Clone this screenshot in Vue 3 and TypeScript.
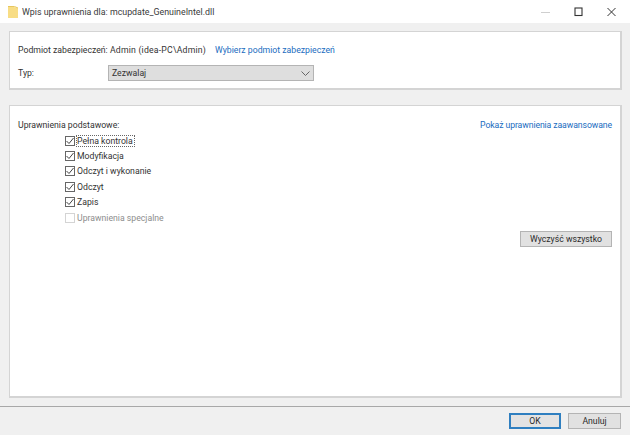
<script setup lang="ts">
const perms = [
  { label: 'Pełna kontrola', checked: true, focused: true },
  { label: 'Modyfikacja', checked: true },
  { label: 'Odczyt i wykonanie', checked: true },
  { label: 'Odczyt', checked: true },
  { label: 'Zapis', checked: true },
  { label: 'Uprawnienia specjalne', checked: false, disabled: true },
]
</script>

<template>
  <div class="window">
    <header class="titlebar">
      <svg class="folder" width="10" height="12" viewBox="0 0 10 12">
        <path d="M0 1h6l4 1v10H0z" fill="#f8dd85" />
        <path d="M0 .5h6.5l3.5 1.5" fill="none" stroke="#e6c65f" stroke-width="1" />
      </svg>
      <span class="title">Wpis uprawnienia dla: mcupdate_GenuineIntel.dll</span>
      <div class="controls">
        <svg width="9" height="10" viewBox="0 0 9 10"><path d="M0 5.5h9" stroke="#cfcfcf" /></svg>
        <svg width="9" height="10" viewBox="0 0 9 10"><rect x="1" y="1" width="7" height="7.5" fill="none" stroke="#333" stroke-width="1.1" /></svg>
        <svg width="9" height="10" viewBox="0 0 9 10"><path d="M.5 1l8 8M8.5 1l-8 8" stroke="#333" /></svg>
      </div>
    </header>

    <main class="content">
      <section class="panel top">
        <div class="row principal">
          <span class="plabel">Podmiot zabezpieczeń:</span>
          <span class="pvalue">Admin (idea-PC\Admin)</span>
          <a class="link">Wybierz podmiot zabezpieczeń</a>
        </div>
        <div class="row type">
          <span class="tlabel">Typ:</span>
          <div class="select">
            <span>Zezwalaj</span>
            <svg width="9" height="5" viewBox="0 0 9 5"><path d="M.5.5l4 4 4-4" fill="none" stroke="#666" /></svg>
          </div>
        </div>
      </section>

      <section class="panel perms">
        <div class="perm-head">
          <span>Uprawnienia podstawowe:</span>
          <a class="link advanced">Pokaż uprawnienia zaawansowane</a>
        </div>
        <ul class="list">
          <li v-for="p in perms" :key="p.label" :class="{ disabled: p.disabled }">
            <span class="box">
              <svg v-if="p.checked" width="10" height="10" viewBox="0 0 10 10"><path d="M1.5 5l2.5 2.5 4.5-5.5" fill="none" stroke="#444" stroke-width="1" /></svg>
            </span>
            <span class="lbl" :class="{ focused: p.focused }">{{ p.label }}</span>
          </li>
        </ul>
        <div class="clear-row"><button class="btn clear">Wyczyść wszystko</button></div>
      </section>
    </main>

    <footer class="footer">
      <button class="btn ok">OK</button>
      <button class="btn cancel">Anuluj</button>
    </footer>
  </div>
</template>

<style>
html, body { margin: 0; padding: 0; background: #f0f0f0; }
</style>

<style scoped>
.window {
  width: 630px;
  height: 435px;
  display: flex;
  flex-direction: column;
  background: #f0f0f0;
  font-family: Roboto, "Open Sans", sans-serif;
  font-size: 8.7px;
  color: #333;
  overflow: hidden;
}
.titlebar {
  height: 23px;
  background: #fff;
  display: flex;
  align-items: center;
  padding-left: 8px;
  flex: none;
}
.folder { margin-right: 4px; }
.title { font-size: 8.85px; color: #3a3a3a; }
.controls {
  margin-left: auto;
  display: flex;
  gap: 24px;
  padding-right: 14px;
  align-items: center;
}
.content {
  flex: 1;
  padding: 8px 8px 0 9px;
  display: flex;
  flex-direction: column;
  gap: 15px;
  border-bottom: 1px solid #a8a8a8;
  box-sizing: border-box;
}
.panel {
  background: #fff;
  border: 1px solid #d4d4d4;
  border-width: 1px 2px 2px 1px;
  box-sizing: border-box;
  padding: 0 8px;
}
.top { height: 59px; }
.perms { height: 293px; }
.row { display: flex; align-items: center; }
.principal { margin-top: 11px; height: 14px; }
.plabel { width: 92px; white-space: nowrap; }
.pvalue { width: 105px; white-space: nowrap; letter-spacing: 0.2px; }
.link { color: #1a6cc0; white-space: nowrap; }
.advanced { letter-spacing: -0.1px; }
.type { margin-top: 8px; }
.tlabel { width: 90px; }
.select {
  width: 206px;
  height: 16px;
  background: #dedede;
  border: 1px solid #b4b4b4;
  box-sizing: border-box;
  display: flex;
  align-items: center;
  justify-content: space-between;
  padding: 0 3px;
}
.perm-head {
  display: flex;
  justify-content: space-between;
  margin-top: 12px;
  height: 14px;
  align-items: center;
}
.list {
  list-style: none;
  margin: 1px 0 0 47px;
  padding: 0;
}
.list li {
  height: 15.4px;
  display: flex;
  align-items: center;
}
.box {
  width: 10px;
  height: 10px;
  border: 1px solid #666;
  box-sizing: border-box;
  background: #fff;
  display: flex;
  align-items: center;
  justify-content: center;
  flex: none;
  margin-right: 1px;
}
.box svg { flex: none; }
.lbl { padding: 0 1px 0 0; border: 1px solid transparent; }
.lbl.focused { border: 1px dotted #666; }
.disabled .box { border-color: #d4d4d4; }
.disabled .lbl { color: #8d8d8d; }
.clear-row { display: flex; justify-content: flex-end; margin-top: 6px; }
.btn {
  font: inherit;
  color: #2a2a2a;
  background: #e1e1e1;
  border: 1px solid #b4b4b4;
  padding: 0;
  height: 16px;
  box-sizing: border-box;
}
.clear { width: 92px; }
.footer {
  height: 28px;
  flex: none;
  display: flex;
  justify-content: flex-end;
  align-items: flex-start;
  gap: 7px;
  padding: 6px 9px 0 0;
  box-sizing: border-box;
}
.ok { width: 52px; border: 2px solid #2f7fc0; background: #e3e3e3; }
.cancel { width: 53px; }
</style>
